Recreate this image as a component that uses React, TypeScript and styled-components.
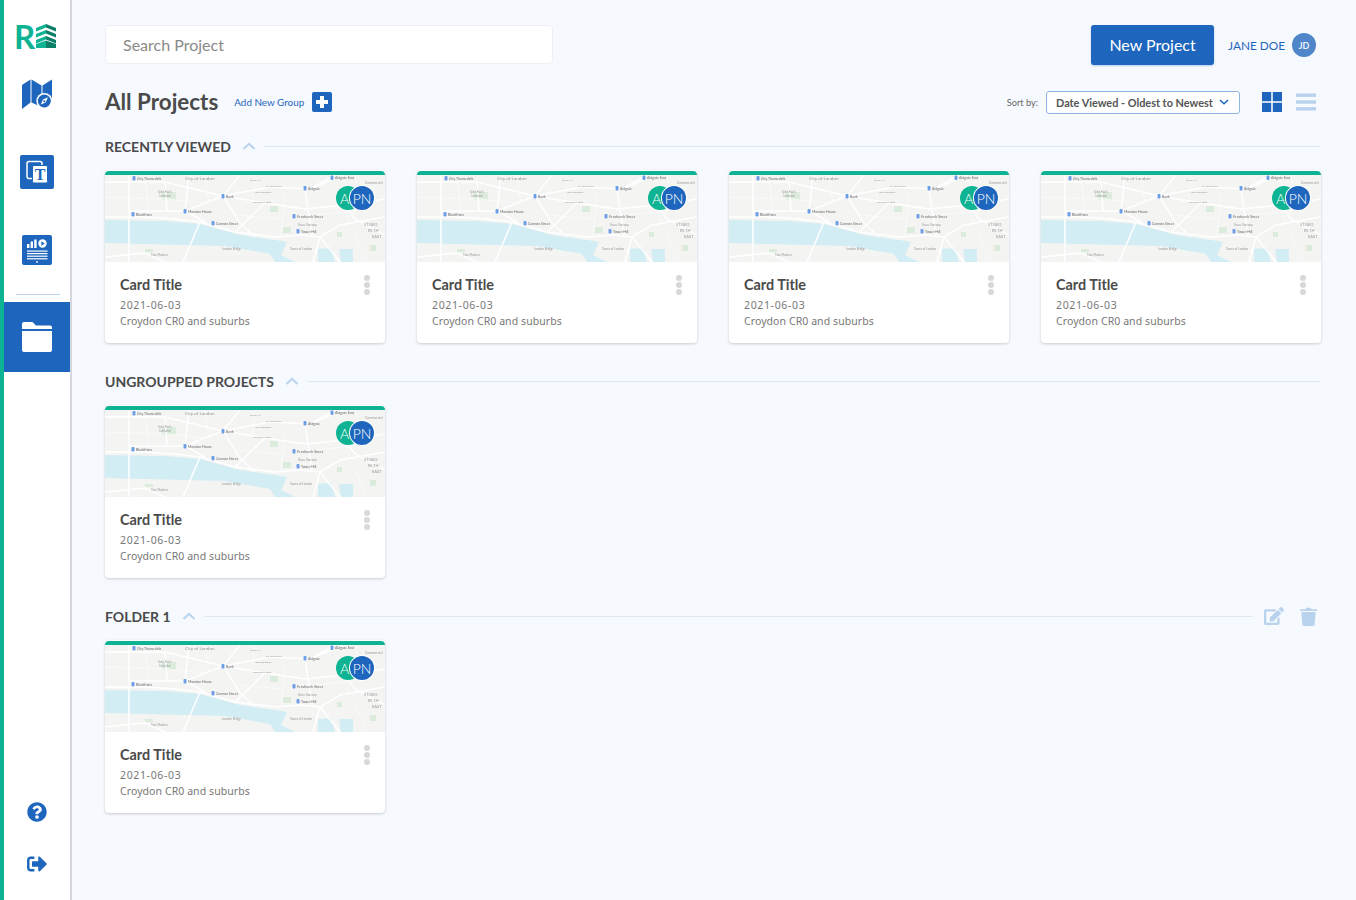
import styled, { createGlobalStyle } from "styled-components";
import { FaEdit, FaQuestionCircle, FaSignOutAlt } from "react-icons/fa";

const BLUE = "#1e66bd";
const TEAL = "#0db392";
const PALE = "#b9d2ee";
const INK = "#4a4a4a";

const GlobalStyle = createGlobalStyle`
  html, body { margin: 0; padding: 0; background: #f6f9fe; }
  body { font-family: "Lato", "Noto Sans", sans-serif; color: ${INK}; }
  * { box-sizing: border-box; }
`;

const Page = styled.div`
  display: flex;
  min-height: 900px;
`;

const Sidebar = styled.nav`
  width: 72px;
  height: 900px;
  flex: none;
  display: flex;
  flex-direction: column;
  align-items: stretch;
  background: #fff;
  border-left: 4px solid ${TEAL};
  border-right: 2px solid #d4d7dc;
`;

const Logo = styled.div`
  height: 24px;
  margin: 24px 0 0 11px;
  display: flex;
  align-items: center;
  gap: 4px;
`;

const LogoLetter = styled.span`
  font-size: 33px;
  line-height: 24px;
  font-weight: 700;
  color: ${TEAL};
  width: 18px;
  margin-left: -1px;
`;

const NavSlot = styled.div<{ $top: number }>`
  display: flex;
  justify-content: center;
  margin-top: ${({ $top }) => $top}px;
`;

const NavRule = styled.div`
  height: 1px;
  margin: 29px 10px 7px 12px;
  background: ${PALE};
`;

const ActiveNav = styled.div`
  height: 70px;
  display: flex;
  align-items: center;
  justify-content: center;
  background: ${BLUE};
`;

const NavFoot = styled.div`
  margin-top: auto;
  padding-bottom: 26px;
  display: flex;
  flex-direction: column;
  align-items: center;
  gap: 32px;
  color: ${BLUE};
  font-size: 20px;
  svg { display: block; }
`;

const Main = styled.main`
  flex: 1;
  padding: 25px 36px 0 33px;
  min-width: 0;
`;

const TopBar = styled.header`
  height: 40px;
  margin-right: 4px;
  display: flex;
  align-items: center;
`;

const Search = styled.div`
  align-self: flex-start;
  width: 448px;
  height: 39px;
  padding-left: 17px;
  display: flex;
  align-items: center;
  font-size: 16px;
  color: #8a8a8a;
  background: #fff;
  border: 1px solid #edf0f5;
  border-radius: 4px;
`;

const NewButton = styled.button`
  width: 123px;
  height: 40px;
  margin-left: auto;
  padding: 0 0 2px;
  border: 0;
  border-radius: 3px;
  background: ${BLUE};
  color: #fff;
  font: 400 16px "Lato", sans-serif;
  box-shadow: 0 1px 2px rgba(30, 102, 189, 0.3);
`;

const UserName = styled.span`
  margin-left: 14px;
  font-size: 11.8px;
  color: ${BLUE};
`;

const UserBadge = styled.span`
  width: 24px;
  height: 24px;
  margin-left: 7px;
  display: flex;
  align-items: center;
  justify-content: center;
  border-radius: 50%;
  background: #4f86c9;
  color: #e8f0fa;
  font-size: 9px;
  font-weight: 700;
`;

const TitleRow = styled.div`
  height: 22px;
  margin-top: 26px;
  margin-right: 4px;
  display: flex;
  align-items: center;
`;

const PageTitle = styled.h1`
  margin: 0;
  font-size: 22.4px;
  line-height: 22px;
  font-weight: 700;
  color: ${INK};
`;

const AddGroup = styled.span`
  margin-left: 16px;
  font-size: 9.9px;
  color: ${BLUE};
`;

const AddButton = styled.span`
  width: 20px;
  height: 20px;
  margin-left: 8px;
  display: flex;
  align-items: center;
  justify-content: center;
  border-radius: 2px;
  background: ${BLUE};
`;

const SortLabel = styled.span`
  margin-left: auto;
  font-size: 9.2px;
  color: #666;
`;

const SortSelect = styled.div`
  width: 194px;
  height: 23px;
  margin-left: 8px;
  padding: 0 10px 0 9px;
  display: flex;
  align-items: center;
  justify-content: space-between;
  font-size: 10.9px;
  font-weight: 700;
  color: #555;
  background: #fff;
  border: 1px solid #8fb4e3;
  border-radius: 3px;
`;

const ViewToggle = styled.div`
  margin-left: 22px;
  display: flex;
  gap: 14px;
`;

const Section = styled.section`
  margin-top: 23px;
  margin-bottom: 28px;
  & + & { margin-top: 0; }
`;

const SectionHead = styled.div`
  height: 20px;
  display: flex;
  align-items: center;
  gap: 11px;
`;

const SectionName = styled.h2`
  margin: 0;
  padding-top: 1px;
  font-size: 14px;
  font-weight: 700;
  color: ${INK};
  white-space: nowrap;
`;

const SectionRule = styled.div`
  flex: 1;
  height: 1px;
  margin-left: -3px;
  background: #e0e8f3;
`;

const SectionTools = styled.div`
  margin: 0 3px 0 0;
  display: flex;
  align-items: center;
  gap: 16px;
  color: ${PALE};
  font-size: 20px;
  svg { display: block; }
`;

const CardGrid = styled.div`
  margin-top: 14px;
  display: grid;
  grid-template-columns: repeat(4, 280px);
  gap: 32px;
`;

const CardBox = styled.article`
  position: relative;
  height: 173px;
  display: flex;
  flex-direction: column;
  background: #fff;
  border-radius: 4px;
  overflow: hidden;
  box-shadow: 0 1px 3px rgba(0, 0, 0, 0.18);
`;

const CardBar = styled.div`
  height: 4px;
  margin-top: 1px;
  flex: none;
  border-radius: 4px 4px 0 0;
  background: ${TEAL};
`;

const MapFrame = styled.div`
  height: 87px;
  flex: none;
  overflow: hidden;
  svg { display: block; filter: blur(0.35px); }
`;

const Avatars = styled.div`
  position: absolute;
  top: 16px;
  right: 11px;
  display: flex;
`;

const Avatar = styled.span<{ $bg: string; $over?: boolean }>`
  width: 24px;
  height: 24px;
  display: flex;
  align-items: center;
  justify-content: center;
  border-radius: 50%;
  background: ${({ $bg }) => $bg};
  color: #fff;
  font-size: 14px;
  font-weight: 300;
  margin-left: ${({ $over }) => ($over ? "-10px" : "0")};
  padding-right: ${({ $over }) => ($over ? "0" : "7px")};
  box-shadow: ${({ $over }) => ($over ? "0 0 0 1px #fff" : "none")};
`;

const CardBody = styled.div`
  position: relative;
  flex: 1;
  padding: 14px 15px 0;
`;

const CardTitle = styled.h3`
  margin: 0;
  font-size: 14.4px;
  line-height: 18px;
  font-weight: 700;
  color: ${INK};
`;

const CardDate = styled.p`
  margin: 5px 0 0;
  font-family: "Noto Sans", sans-serif;
  font-size: 10.5px;
  line-height: 13px;
  letter-spacing: 0.65px;
  color: #777;
`;

const CardPlace = styled.p`
  margin: 3px 0 0;
  font-family: "Noto Sans", sans-serif;
  font-size: 10.5px;
  line-height: 13px;
  letter-spacing: 0.08px;
  color: #777;
`;

const Kebab = styled.div`
  position: absolute;
  top: 13px;
  right: 15px;
  display: flex;
  flex-direction: column;
  gap: 1px;
`;

const KebabDot = styled.span`
  width: 6px;
  height: 6px;
  border-radius: 50%;
  background: #d8d8d8;
`;

const Chevron = ({ color = PALE }: { color?: string }) => (
  <svg width="14" height="8" viewBox="0 0 14 8" fill="none">
    <path d="M1.5 7 7 1.8 12.5 7" stroke={color} strokeWidth="2" />
  </svg>
);

const LogoMark = () => (
  <svg width="20" height="24" viewBox="0 0 20 24">
    {[0, 6, 12].map((y) => (
      <g key={y}>
        <path d={`M0 ${y + 4}L10 ${y}V${y + 3.6}L0 ${y + 7.6}Z`} fill={TEAL} />
        <path d={`M10 ${y}L20 ${y + 4}V${y + 7.6}L10 ${y + 3.6}Z`} fill="#0b7f68" />
      </g>
    ))}
    <path d="M0 20 10 16.5V24H0Z" fill={TEAL} />
    <path d="M10 16.5 20 20V24H10Z" fill="#0b7f68" />
  </svg>
);

const MapIcon = () => (
  <svg width="30" height="30" viewBox="0 0 30 30" fill={BLUE}>
    <path d="M0 6 8.5 .5V23.5L0 30Z" />
    <path d="M9.5 .5 19.5 6.5V28L9.5 23.5Z" />
    <path d="M20.5 6.5 30 .5V24H20.5Z" />
    <circle cx="22.3" cy="22" r="8" fill="#fff" />
    <circle cx="22.3" cy="22" r="6.5" />
    <path d="M26 18.2 23.6 23.4 18.8 25.6 21 20.6Z" fill="#fff" />
    <circle cx="22.3" cy="22.2" r="1" />
  </svg>
);

const TextIcon = () => (
  <svg width="34" height="34" viewBox="0 0 34 34">
    <rect width="34" height="34" rx="2" fill={BLUE} />
    <rect x="7" y="6.5" width="15" height="17" rx="2" fill="none" stroke="#fff" strokeWidth="1.5" />
    <rect x="12.5" y="10.5" width="15" height="17.5" rx="1.5" fill="#fff" stroke={BLUE} strokeWidth="1" />
    <text x="20" y="25" fontSize="16" fontWeight="700" fontFamily="Liberation Serif, serif" textAnchor="middle" fill={BLUE}>
      T
    </text>
  </svg>
);

const ReportIcon = () => (
  <svg width="30" height="30" viewBox="0 0 30 30">
    <rect width="30" height="30" rx="2" fill={BLUE} />
    <g fill="#fff">
      <rect x="5" y="9" width="2.4" height="4" />
      <rect x="8.6" y="6.5" width="2.4" height="6.5" />
      <rect x="12.2" y="4.5" width="2.4" height="8.5" />
      <circle cx="20.5" cy="8.5" r="4.2" />
      <rect x="5" y="15.5" width="20.5" height="1.2" />
      <rect x="5" y="18" width="20.5" height="1.2" />
      <rect x="5" y="20.6" width="20.5" height="1.2" />
      <rect x="5" y="23.2" width="20.5" height="1.2" />
      <rect x="14.2" y="26.2" width="1.6" height="1.6" />
    </g>
    <path d="M19.3 6.3 22.8 8.5 19.3 10.7Z" fill={BLUE} />
  </svg>
);

const FolderIcon = () => (
  <svg width="30" height="30" viewBox="0 0 30 30" fill="#fff">
    <path d="M0 7V2a2 2 0 0 1 2-2h8.5l3.5 3.5H28a2 2 0 0 1 2 2V7Z" />
    <path d="M0 9H30V28a2 2 0 0 1-2 2H2a2 2 0 0 1-2-2Z" />
  </svg>
);

const TrashIcon = () => (
  <svg width="17" height="19" viewBox="0 0 18 20" fill={PALE}>
    <path d="M0 2.4h6L7 .8h4l1 1.6h6v1.8H0Z" />
    <path d="M1.4 5.2h15.2L15.5 18.5a1.5 1.5 0 0 1-1.5 1.5H4a1.5 1.5 0 0 1-1.5-1.5Z" />
  </svg>
);

const PlusIcon = () => (
  <svg width="14" height="14" viewBox="0 0 14 14" fill="#fff">
    <path d="M5 1h4v4h4v4H9v4H5V9H1V5h4Z" />
  </svg>
);

const GridIcon = () => (
  <svg width="20" height="20" viewBox="0 0 20 20" fill={BLUE}>
    <rect width="9.2" height="9.2" />
    <rect x="10.8" width="9.2" height="9.2" />
    <rect y="10.8" width="9.2" height="9.2" />
    <rect x="10.8" y="10.8" width="9.2" height="9.2" />
  </svg>
);

const ListIcon = () => (
  <svg width="20" height="20" viewBox="0 0 20 20" fill={PALE}>
    <rect y="1.5" width="20" height="3.4" />
    <rect y="8.3" width="20" height="3.4" />
    <rect y="15.1" width="20" height="3.4" />
  </svg>
);

const pins = [
  { x: 29, y: 3, label: "City Thameslink" },
  { x: 118, y: 21, label: "Bank" },
  { x: 80, y: 36, label: "Mansion House" },
  { x: 28, y: 39, label: "Blackfriars" },
  { x: 108, y: 48, label: "Cannon Street" },
  { x: 227, y: 2.5, label: "Aldgate East" },
  { x: 200, y: 13, label: "Aldgate" },
  { x: 189, y: 41, label: "Fenchurch Street" },
  { x: 193, y: 56, label: "Tower Hill" },
];

const notes = [
  { x: 80, y: 3.5, size: 4.6, label: "City of London" },
  { x: 260, y: 8, size: 3.4, label: "Commercial" },
  { x: 53, y: 17, size: 2.8, label: "Saint Paul's" },
  { x: 54, y: 21, size: 2.8, label: "Cathedral" },
  { x: 145, y: 5, size: 2.6, label: "Tower 42" },
  { x: 161, y: 11, size: 2.6, label: "20 Fenchurch" },
  { x: 149, y: 17, size: 2.6, label: "120 Leadenhall" },
  { x: 148, y: 27, size: 2.6, label: "Leadenhall Bldg" },
  { x: 193, y: 50, size: 2.8, label: "Grace Gateway" },
  { x: 185, y: 74, size: 3, label: "Tower of London" },
  { x: 117, y: 74, size: 3, label: "London Bridge" },
  { x: 46, y: 80, size: 3, label: "Tate Modern" },
  { x: 259, y: 50, size: 4, label: "ST.GEO" },
  { x: 263, y: 56, size: 4, label: "IN TH" },
  { x: 267, y: 62, size: 4, label: "EAST" },
];

const roads = [
  "M0 42 40 42 70 44 95 47 130 57 170 62 195 60 215 62 235 50 280 42",
  "M24 0V87",
  "M95 47 78 87",
  "M0 7 60 7 118 21 160 28 200 34 240 30 280 24",
  "M118 21 135 48 150 62",
  "M118 21 135 0",
  "M80 36 118 21 165 12 205 14 230 0",
  "M80 36 100 47",
  "M24 36 80 36",
  "M84 0 80 36",
  "M200 14 207 60",
  "M205 14 238 0",
  "M232 20 250 44 280 60",
  "M215 62 208 87",
  "M160 28 130 57",
  "M215 62 235 87",
  "M0 82 40 78 60 87",
  "M60 7 62 36",
];

const sideStreets = [
  "M40 0 44 42",
  "M100 0 104 28",
  "M150 0 148 24",
  "M180 20 176 62",
  "M240 30 244 48",
  "M250 0 256 30",
  "M0 22 60 24",
  "M62 24 100 28",
  "M130 40 176 44",
  "M210 40 250 36",
  "M250 60 262 87",
];

const MapThumb = () => (
  <svg width="280" height="87" viewBox="0 0 280 87" fontFamily="Lato, sans-serif">
    <rect width="280" height="87" fill="#f4f4f3" />
    <path d="M57 17h14v8H57ZM165 31h8v6h-8ZM178 52h8v6h-8ZM232 57h5v5h-5ZM265 70h6v6h-6ZM40 74h8v3h-8Z" fill="#dcecdc" />
    <path d="M0 45 60 46 95 49 135 60 170 65 182 67 176 80 190 87H170L165 79 120 71 80 70 0 68Z" fill="#d2edf4" />
    <path d="M213 74 226 73 230 87H213ZM234 74H248V87H236Z" fill="#d2edf4" />
    <g fill="none" stroke="#fbfbfb" strokeWidth="0.8">
      {sideStreets.map((d) => (
        <path key={d} d={d} />
      ))}
    </g>
    <g fill="none" stroke="#fff" strokeWidth="1.5">
      {roads.map((d) => (
        <path key={d} d={d} />
      ))}
    </g>
    {notes.map((n) => (
      <text key={n.label} x={n.x} y={n.y + 1} fontSize={n.size} fill="#9a9a9a">
        {n.label}
      </text>
    ))}
    {pins.map((p) => (
      <g key={p.label}>
        <rect x={p.x - 1.5} y={p.y - 2} width="3" height="4.5" rx="1" fill="#6e9fe6" />
        <text x={p.x + 3} y={p.y + 1.5} fontSize="3.5" fill="#6b6b6b">
          {p.label}
        </text>
      </g>
    ))}
  </svg>
);

const ProjectCard = () => (
  <CardBox>
    <CardBar />
    <MapFrame>
      <MapThumb />
    </MapFrame>
    <Avatars>
      <Avatar $bg={TEAL}>A</Avatar>
      <Avatar $bg={BLUE} $over>
        PN
      </Avatar>
    </Avatars>
    <CardBody>
      <CardTitle>Card Title</CardTitle>
      <CardDate>2021-06-03</CardDate>
      <CardPlace>Croydon CR0 and suburbs</CardPlace>
      <Kebab>
        <KebabDot />
        <KebabDot />
        <KebabDot />
      </Kebab>
    </CardBody>
  </CardBox>
);

const App = () => (
  <Page>
    <GlobalStyle />
    <Sidebar>
      <Logo>
        <LogoLetter>R</LogoLetter>
        <LogoMark />
      </Logo>
      <NavSlot $top={31}>
        <MapIcon />
      </NavSlot>
      <NavSlot $top={46}>
        <TextIcon />
      </NavSlot>
      <NavSlot $top={46}>
        <ReportIcon />
      </NavSlot>
      <NavRule />
      <ActiveNav>
        <FolderIcon />
      </ActiveNav>
      <NavFoot>
        <FaQuestionCircle />
        <FaSignOutAlt />
      </NavFoot>
    </Sidebar>
    <Main>
      <TopBar>
        <Search>Search Project</Search>
        <NewButton>New Project</NewButton>
        <UserName>JANE DOE</UserName>
        <UserBadge>JD</UserBadge>
      </TopBar>
      <TitleRow>
        <PageTitle>All Projects</PageTitle>
        <AddGroup>Add New Group</AddGroup>
        <AddButton>
          <PlusIcon />
        </AddButton>
        <SortLabel>Sort by:</SortLabel>
        <SortSelect>
          Date Viewed - Oldest to Newest
          <svg width="10" height="6" viewBox="0 0 10 6" fill="none">
            <path d="M1 1 5 4.8 9 1" stroke={BLUE} strokeWidth="1.5" />
          </svg>
        </SortSelect>
        <ViewToggle>
          <GridIcon />
          <ListIcon />
        </ViewToggle>
      </TitleRow>
      <Section>
        <SectionHead>
          <SectionName>RECENTLY VIEWED</SectionName>
          <Chevron />
          <SectionRule />
        </SectionHead>
        <CardGrid>
          <ProjectCard />
          <ProjectCard />
          <ProjectCard />
          <ProjectCard />
        </CardGrid>
      </Section>
      <Section>
        <SectionHead>
          <SectionName>UNGROUPPED PROJECTS</SectionName>
          <Chevron />
          <SectionRule />
        </SectionHead>
        <CardGrid>
          <ProjectCard />
        </CardGrid>
      </Section>
      <Section>
        <SectionHead>
          <SectionName>FOLDER 1</SectionName>
          <Chevron />
          <SectionRule />
          <SectionTools>
            <FaEdit />
            <TrashIcon />
          </SectionTools>
        </SectionHead>
        <CardGrid>
          <ProjectCard />
        </CardGrid>
      </Section>
    </Main>
  </Page>
);

export default App;
